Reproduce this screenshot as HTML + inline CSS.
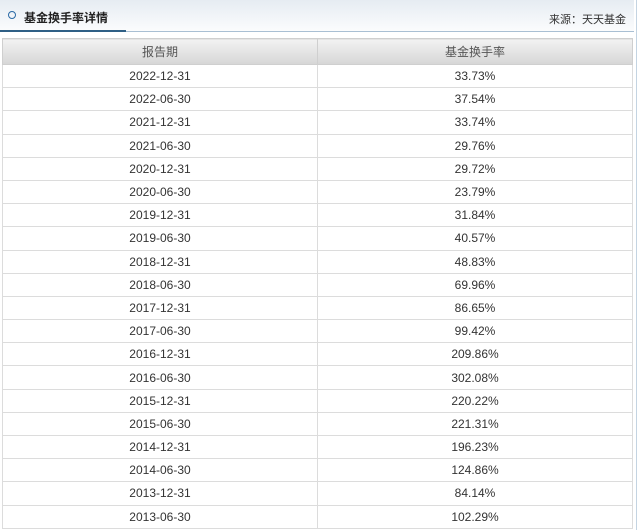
<!DOCTYPE html>
<html><head><meta charset="utf-8"><style>
body{margin:0;width:640px;height:530px;background:#fff;font-family:"Liberation Sans","Noto Sans CJK SC",sans-serif;position:relative;overflow:hidden}
.hd{position:absolute;left:0;top:0;width:634px;height:31px;background:linear-gradient(#e6ecf2,#fbfcfd);border-bottom:1px solid #a9bfd3}
.hd .ul{position:absolute;left:0;bottom:-1px;width:126px;height:2px;background:#2f5f85}
.hd .t{position:absolute;left:24px;top:9px;font-size:12px;font-weight:bold;color:#222}
.hd .c{position:absolute;left:8px;top:11px;width:6px;height:6px;border:1.5px solid #2a6aa5;border-radius:50%}
.hd .s{position:absolute;right:8px;top:11px;font-size:11px;color:#333}
.vr{position:absolute;left:636px;top:0;width:1px;height:530px;background:#c4d4e2}
table{position:absolute;left:2px;top:38px;width:631px;border-collapse:collapse;font-size:12px;color:#333}
th{height:25px;padding:0;font-weight:normal;color:#555;background:linear-gradient(#f2f2f2,#d6d6d6);border:1px solid #cfcfcf}
td{height:22.2px;padding:0;text-align:center;border:1px solid #dcdcdc}
</style></head><body>
<div class="hd"><div class="c"></div><div class="t">基金换手率详情</div><div class="s">来源：天天基金</div><div class="ul"></div></div>
<div class="vr"></div>
<table>
<tr><th style="width:314px">报告期</th><th>基金换手率</th></tr>
<tr><td>2022-12-31</td><td>33.73%</td></tr>
<tr><td>2022-06-30</td><td>37.54%</td></tr>
<tr><td>2021-12-31</td><td>33.74%</td></tr>
<tr><td>2021-06-30</td><td>29.76%</td></tr>
<tr><td>2020-12-31</td><td>29.72%</td></tr>
<tr><td>2020-06-30</td><td>23.79%</td></tr>
<tr><td>2019-12-31</td><td>31.84%</td></tr>
<tr><td>2019-06-30</td><td>40.57%</td></tr>
<tr><td>2018-12-31</td><td>48.83%</td></tr>
<tr><td>2018-06-30</td><td>69.96%</td></tr>
<tr><td>2017-12-31</td><td>86.65%</td></tr>
<tr><td>2017-06-30</td><td>99.42%</td></tr>
<tr><td>2016-12-31</td><td>209.86%</td></tr>
<tr><td>2016-06-30</td><td>302.08%</td></tr>
<tr><td>2015-12-31</td><td>220.22%</td></tr>
<tr><td>2015-06-30</td><td>221.31%</td></tr>
<tr><td>2014-12-31</td><td>196.23%</td></tr>
<tr><td>2014-06-30</td><td>124.86%</td></tr>
<tr><td>2013-12-31</td><td>84.14%</td></tr>
<tr><td>2013-06-30</td><td>102.29%</td></tr>
</table>
</body></html>
